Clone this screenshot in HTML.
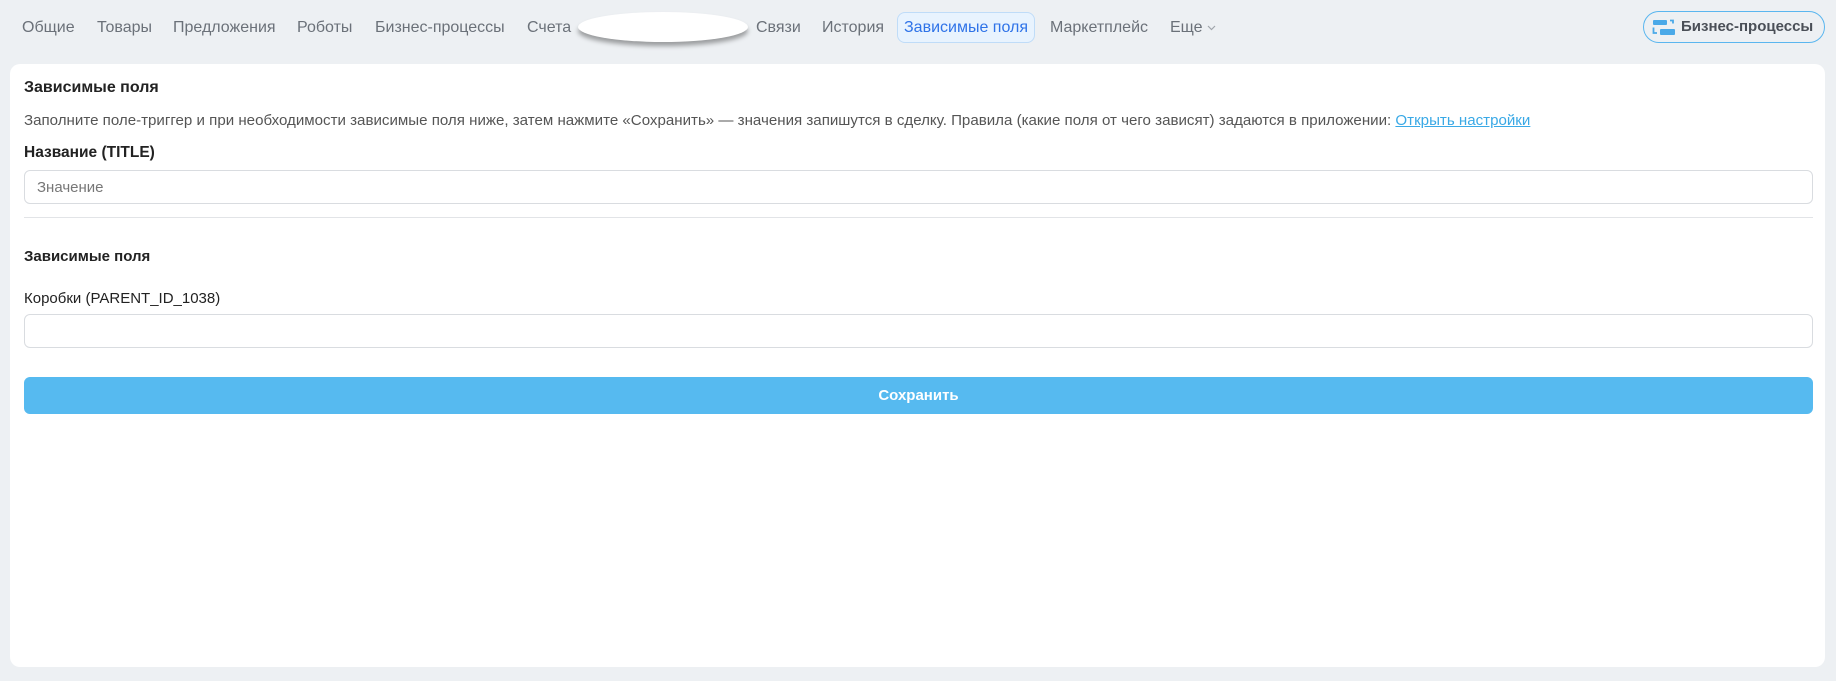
<!DOCTYPE html>
<html><head><meta charset="utf-8"><style>
*{box-sizing:border-box;margin:0;padding:0}
body{width:1836px;height:681px;background:#edf0f3;font-family:"Liberation Sans","Noto Sans CJK SC",sans-serif;position:relative;overflow:hidden;color:#333}
.tab{position:absolute;top:18px;font-size:16px;color:#6b7179;line-height:20px;white-space:nowrap}
.act{position:absolute;left:897px;top:12px;width:138px;height:31px;border:1px solid #bfdcf8;background:#e8f3fe;border-radius:8px;color:#2f73e8;font-size:16px;line-height:30px;text-align:center}
.ell{position:absolute;left:578px;top:12px;width:170px;height:30px;border-radius:50%;background:#fff;box-shadow:0 4px 5px rgba(0,0,0,.35)}
.bp{position:absolute;left:1643px;top:11px;width:182px;height:32px;border:1.5px solid #5ab6ef;border-radius:16px;font-size:15px;font-weight:bold;color:#4a4f57;line-height:29px;padding-left:37px}
.card{position:absolute;left:10px;top:64px;width:1815px;height:603px;background:#fff;border-radius:10px}
.t{position:absolute;left:24px;white-space:nowrap;color:#222}
.inp{position:absolute;left:24px;width:1789px;height:34px;border:1px solid #d9dce0;border-radius:6px;background:#fff}
</style></head><body>
<div class="tab" style="left:22px">Общие</div>
<div class="tab" style="left:97px">Товары</div>
<div class="tab" style="left:173px">Предложения</div>
<div class="tab" style="left:297px">Роботы</div>
<div class="tab" style="left:375px">Бизнес-процессы</div>
<div class="tab" style="left:527px">Счета</div>
<div class="ell"></div>
<div class="tab" style="left:756px">Связи</div>
<div class="tab" style="left:822px">История</div>
<div class="act">Зависимые поля</div>
<div class="tab" style="left:1050px">Маркетплейс</div>
<div class="tab" style="left:1170px">Еще <svg width="9" height="6" viewBox="0 0 9 6" style="vertical-align:middle"><path d="M1 1l3.5 3.5L8 1" stroke="#a0a5ab" stroke-width="1.2" fill="none"/></svg></div>
<div class="bp"><svg style="position:absolute;left:8px;top:7px" width="24" height="17" viewBox="0 0 24 17"><rect x="1" y="1" width="14" height="5" rx="1" fill="#4aa9e8"/><rect x="8" y="10" width="15" height="6" rx="1" fill="#4aa9e8"/><path d="M18 1.5h3v3" stroke="#4aa9e8" stroke-width="1.8" fill="none"/><path d="M1.5 8.5v5.5h3.5" stroke="#4aa9e8" stroke-width="1.8" fill="none"/></svg>Бизнес-процессы</div>
<div class="card"></div>
<div class="t" style="top:79px;font-size:16px;font-weight:bold">Зависимые поля</div>
<div class="t" style="top:112px;font-size:15.1px;color:#555">Заполните поле-триггер и при необходимости зависимые поля ниже, затем нажмите «Сохранить» — значения запишутся в сделку. Правила (какие поля от чего зависят) задаются в приложении: <span style="color:#3aa9e6;text-decoration:underline">Открыть настройки</span></div>
<div class="t" style="top:144px;font-size:15.5px;font-weight:bold">Название (TITLE)</div>
<div class="inp" style="top:170px"><span style="position:absolute;left:12px;top:8px;font-size:15px;color:#777">Значение</span></div>
<div style="position:absolute;left:24px;top:217px;width:1789px;height:1px;background:#e2e4e7"></div>
<div class="t" style="top:248px;font-size:15px;font-weight:bold">Зависимые поля</div>
<div class="t" style="top:290px;font-size:15px">Коробки (PARENT_ID_1038)</div>
<div class="inp" style="top:314px"></div>
<div style="position:absolute;left:24px;top:377px;width:1789px;height:37px;background:#56baf0;border-radius:6px;color:#fff;font-size:15px;font-weight:bold;text-align:center;line-height:37px">Сохранить</div>
</body></html>
